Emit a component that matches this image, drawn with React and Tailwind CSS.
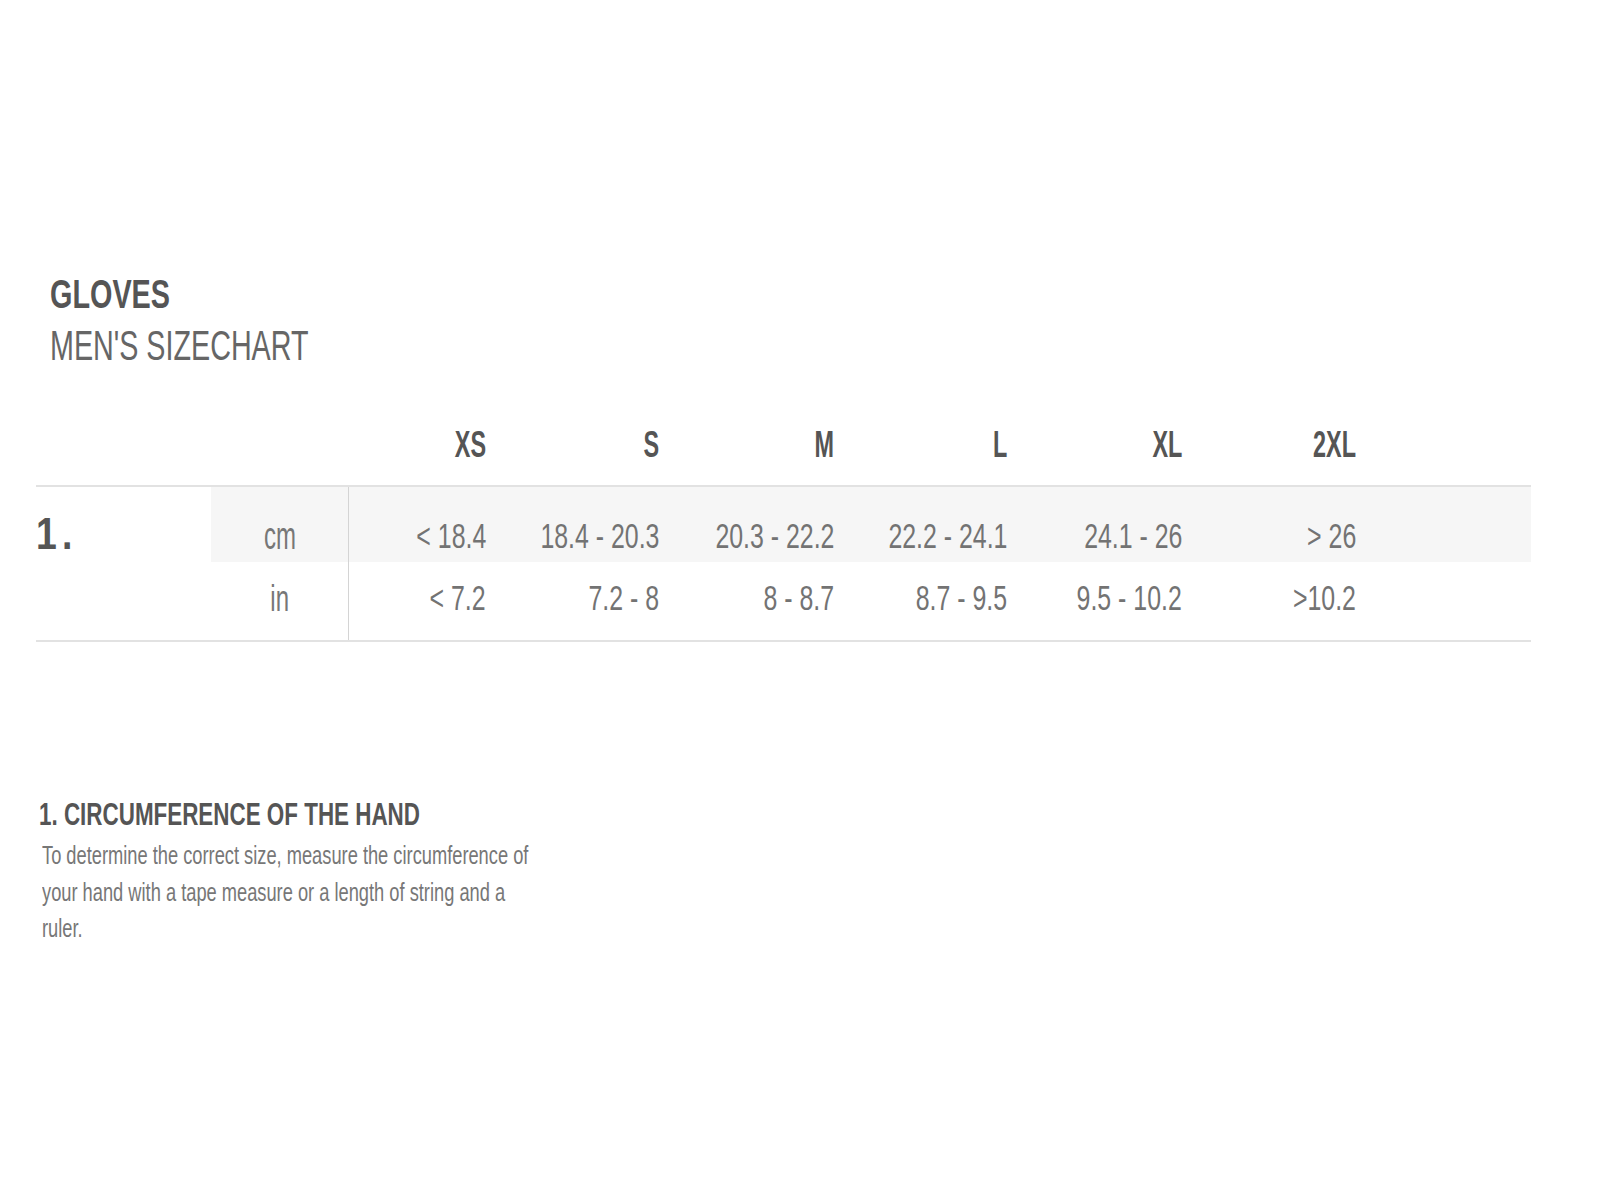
export default function App() {
  const sizes = ['XS', 'S', 'M', 'L', 'XL', '2XL']
  const cm = ['< 18.4', '18.4 - 20.3', '20.3 - 22.2', '22.2 - 24.1', '24.1 - 26', '> 26']
  const inch = ['< 7.2', '7.2 - 8', '8 - 8.7', '8.7 - 9.5', '9.5 - 10.2', '>10.2']
  const cols = 'grid grid-cols-[175px_138px_137px_173px_175px_173px_175px_174px_1fr]'
  const lines = [
    'To determine the correct size, measure the circumference of',
    'your hand with a tape measure or a length of string and a',
    'ruler.',
  ]

  return (
    <div
      className="min-h-[1200px] w-full bg-white"
      style={{ fontFamily: '"Liberation Sans", Arial, sans-serif' }}
    >
      <div className="px-[50px] pt-[270px]">
        <h1 className="origin-left scale-x-[0.8] scale-y-[1.15] text-[36px] font-bold leading-[48px] text-[#555]">
          GLOVES
        </h1>
        <h2 className="mt-[4px] origin-left scale-x-[0.82] scale-y-[1.24] text-[35px] leading-[46px] text-[#666]">
          MEN'S SIZECHART
        </h2>
      </div>

      <div className="mx-[36px] mt-[35px] w-[1495px]">
        <div className={`${cols} h-[82px] items-center`}>
          <div />
          <div />
          {sizes.map((s) => (
            <div key={s} className="flex justify-end">
              <span className="origin-right scale-x-[0.78] scale-y-[1.2] text-[30px] font-bold text-[#555]">{s}</span>
            </div>
          ))}
          <div />
        </div>

        <div className="h-[2px] bg-[#e2e2e2]" />

        <div className={`${cols} h-[75px] leading-[36px]`}>
          <div className="flex items-center pt-[18px]">
            <span className="origin-left scale-x-[0.85] text-[44px] font-bold leading-none tracking-[6px] text-[#555]">1.</span>
          </div>
          <div className="flex items-center justify-center border-r border-[#d4d4d4] bg-[#f6f6f6] pt-[22px]">
            <span className="scale-x-[0.8] scale-y-[1.28] text-[30px] text-[#777]">cm</span>
          </div>
          {cm.map((v, i) => (
            <div key={i} className="flex items-center justify-end bg-[#f6f6f6] pt-[24px]">
              <span className="origin-right scale-x-[0.83] scale-y-[1.15] text-[30px] text-[#737373]">{v}</span>
            </div>
          ))}
          <div className="bg-[#f6f6f6]" />
        </div>

        <div className={`${cols} h-[78px] leading-[36px]`}>
          <div />
          <div className="flex items-center justify-center border-r border-[#d4d4d4] pb-[4px]">
            <span className="scale-x-[0.8] scale-y-[1.2] text-[30px] text-[#777]">in</span>
          </div>
          {inch.map((v, i) => (
            <div key={i} className="flex items-center justify-end pb-[4px]">
              <span className="origin-right scale-x-[0.83] scale-y-[1.15] text-[30px] text-[#737373]">{v}</span>
            </div>
          ))}
          <div />
        </div>

        <div className="h-[2px] bg-[#e2e2e2]" />
      </div>

      <div className="px-[39px] pt-[155px]">
        <h3 className="origin-left scale-x-[0.83] scale-y-[1.14] whitespace-nowrap text-[27px] font-bold leading-[36px] text-[#555]">
          1. CIRCUMFERENCE OF THE HAND
        </h3>
        <div className="mt-[4px] pl-[3px] text-[21px] leading-[36.5px] text-[#777]">
          {lines.map((l) => (
            <span key={l} className="block origin-left scale-x-[0.87] scale-y-[1.25] whitespace-nowrap">
              {l}
            </span>
          ))}
        </div>
      </div>
    </div>
  )
}
